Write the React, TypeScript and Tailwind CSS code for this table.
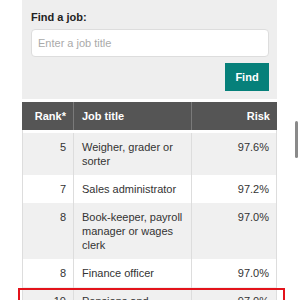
const rows = [
  { rank: "5", title: "Weigher, grader or sorter", risk: "97.6%" },
  { rank: "7", title: "Sales administrator", risk: "97.2%" },
  { rank: "8", title: "Book-keeper, payroll manager or wages clerk", risk: "97.0%" },
  { rank: "8", title: "Finance officer", risk: "97.0%" },
];

function Row({ rank, title, risk, shaded }: { rank: string; title: string; risk: string; shaded: boolean }) {
  return (
    <div
      className={`grid grid-cols-[51px_118px_86px] text-[11px] leading-[14px] text-[#333] ${
        shaded ? "bg-[#f0f0f0]" : "bg-white"
      }`}
    >
      <div className="border-l border-[#ddd] py-[7px] pr-[7px] text-right">{rank}</div>
      <div className="border-l border-[#ddd] py-[7px] pl-[8px] pr-[6px]">{title}</div>
      <div className="border-l border-r border-[#ddd] py-[7px] pr-[7px] text-right">{risk}</div>
    </div>
  );
}

export default function App() {
  return (
    <div className="relative h-[300px] w-[300px] overflow-hidden bg-white font-['Liberation_Sans',Arial,sans-serif]">
      <div className="ml-[22px] w-[255px]">
        <div className="bg-[#eeeeee] pl-[9px] pr-[8px] pt-[10px] pb-[8px]">
          <div className="text-[11px] font-bold leading-[14px] text-[#222]">Find a job:</div>
          <input
            type="text"
            placeholder="Enter a job title"
            className="mt-[5px] block h-[28px] w-full rounded-[4px] border border-[#dddddd] bg-white px-[6px] text-[11px] text-[#333] outline-none placeholder:text-[#aaaaaa]"
          />
          <div className="mt-[6px] flex justify-end">
            <button className="h-[28px] w-[44px] bg-[#06807a] text-[11px] font-bold text-white">Find</button>
          </div>
        </div>

        <div className="mt-[3px]">
          <div className="grid grid-cols-[51px_118px_86px] bg-[#555555] text-[11px] font-bold leading-[14px] text-white">
            <div className="py-[7px] pr-[7px] text-right">Rank*</div>
            <div className="border-l border-[#7a7a7a] py-[7px] pl-[8px]">Job title</div>
            <div className="border-l border-[#7a7a7a] py-[7px] pr-[7px] text-right">Risk</div>
          </div>
          <div className="h-[3px] border-x border-[#ddd] bg-white" />
          {rows.map((r, i) => (
            <Row key={i} {...r} shaded={i % 2 === 0} />
          ))}
          <div className="relative">
            <Row rank="10" title="Pensions and consultant" risk="97.0%" shaded />
            <div className="pointer-events-none absolute -left-[4px] -right-[8px] top-[1px] h-[40px] border-2 border-[#e3131b]" />
          </div>
        </div>
      </div>
      <div className="absolute right-[2px] top-[121px] h-[37px] w-[3px] rounded-full bg-[#8a8a8a]" />
    </div>
  );
}
